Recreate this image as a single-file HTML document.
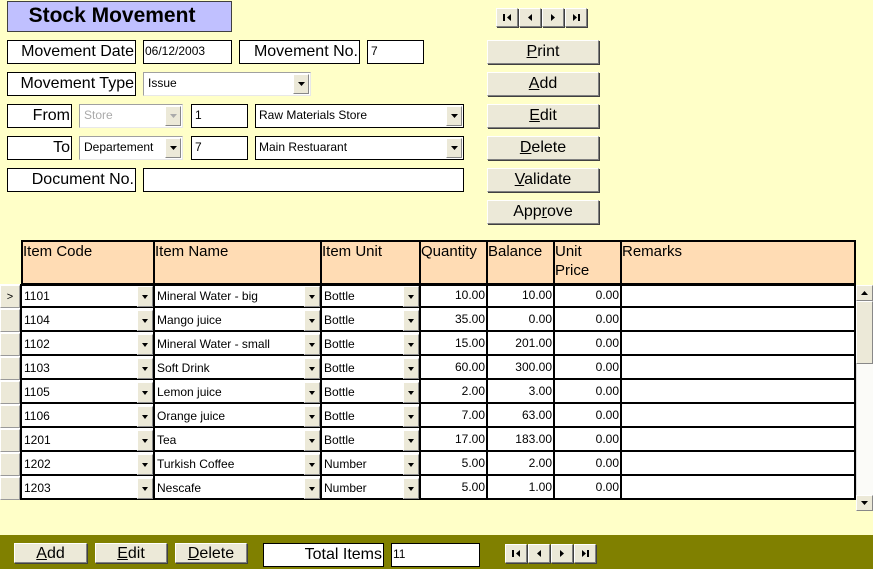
<!DOCTYPE html>
<html><head><meta charset="utf-8">
<style>
*{box-sizing:border-box;margin:0;padding:0}
body{width:873px;height:569px;background:#ffffc8;position:relative;overflow:hidden;font-family:"Liberation Sans",sans-serif;}
.a{position:absolute}
.lbl{position:absolute;background:#fff;border:1px solid #000;font-size:16px;text-align:right;padding-right:1px;line-height:21px;white-space:nowrap;color:#000}
.fld{position:absolute;background:#fff;border:1px solid #000;font-size:12px;line-height:20px;padding-left:3px;white-space:nowrap}
.cmb{position:absolute;background:#fff;border:1px solid #a0a0a0;border-right-color:#e8e8e8;border-bottom-color:#e8e8e8;font-size:12px;line-height:20px;padding-left:4px;white-space:nowrap}
.dd{position:absolute;right:1px;top:1px;bottom:1px;width:16px;background:#ece9d8;border:1px solid #fff;border-right-color:#888;border-bottom-color:#888}
.dd svg{position:absolute;left:4px;top:50%;margin-top:-2px}
.btn{position:absolute;background:#ece9d8;border:1px solid #fff;border-right-color:#808080;border-bottom-color:#808080;box-shadow:1px 1px 0 #404040;font-size:16px;text-align:center;line-height:21px;color:#000}
.nav{position:absolute;width:22px;height:19px;background:#ece9d8;border:1px solid #fff;border-right-color:#808080;border-bottom-color:#808080;box-shadow:1px 1px 0 #404040}
.nav svg{position:absolute;left:6px;top:4px}
.hd{position:absolute;top:240px;height:45px;background:#ffdcb4;border:2px solid #000;border-right:none;font-size:15px;line-height:19px;padding-left:0px;color:#000}
.cell{position:absolute;height:24px;background:#fff;border-left:2px solid #000;border-bottom:2px solid #000;font-size:12px;line-height:22px;white-space:nowrap}
.num{text-align:right;padding-right:2px}
.txt{padding-left:2px}
.sel{position:absolute;left:0;width:20px;height:23px;background:#ece9d8;border:1px solid #fff;border-right-color:#999;border-bottom-color:#999;font-size:11px;text-align:center;line-height:22px}
</style></head><body>

<div class="a" style="left:7px;top:1px;width:225px;height:31px;background:#c0c0ff;border:1px solid #404040;font-weight:bold;font-size:21px;text-align:center;line-height:28px;padding-right:15px">Stock Movement</div>

<div class="lbl" style="left:7px;top:40px;width:129px;height:24px">Movement Date</div>
<div class="fld" style="left:143px;top:40px;width:89px;height:24px;padding-left:1px">06/12/2003</div>
<div class="lbl" style="left:239px;top:40px;width:121px;height:24px">Movement No.</div>
<div class="fld" style="left:367px;top:40px;width:57px;height:24px">7</div>

<div class="lbl" style="left:7px;top:72px;width:129px;height:24px">Movement Type</div>
<div class="cmb" style="left:143px;top:72px;width:168px;height:24px">Issue<div class="dd"><svg width="7" height="4"><path d="M0 0H7L3.5 4Z" fill="#000"/></svg></div></div>

<div class="lbl" style="left:7px;top:104px;width:65px;height:24px">From</div>
<div class="cmb" style="left:79px;top:104px;width:104px;height:24px;color:#aaa">Store<div class="dd"><svg width="7" height="4"><path d="M0 0H7L3.5 4Z" fill="#aaa"/></svg></div></div>
<div class="fld" style="left:191px;top:104px;width:57px;height:24px">1</div>
<div class="fld" style="left:255px;top:104px;width:209px;height:24px">Raw Materials Store<div class="dd"><svg width="7" height="4"><path d="M0 0H7L3.5 4Z" fill="#000"/></svg></div></div>

<div class="lbl" style="left:7px;top:136px;width:65px;height:24px">To</div>
<div class="cmb" style="left:79px;top:136px;width:104px;height:24px">Departement<div class="dd"><svg width="7" height="4"><path d="M0 0H7L3.5 4Z" fill="#000"/></svg></div></div>
<div class="fld" style="left:191px;top:136px;width:57px;height:24px">7</div>
<div class="fld" style="left:255px;top:136px;width:209px;height:24px">Main Restuarant<div class="dd"><svg width="7" height="4"><path d="M0 0H7L3.5 4Z" fill="#000"/></svg></div></div>

<div class="lbl" style="left:7px;top:168px;width:129px;height:24px">Document No.</div>
<div class="fld" style="left:143px;top:168px;width:321px;height:24px"></div>

<div class="nav" style="left:496px;top:8px"><svg width="9" height="9"><path d="M1 1V8" stroke="#000" stroke-width="2"/><path d="M8 1V8L4 4.5Z" fill="#000"/></svg></div>
<div class="nav" style="left:519px;top:8px"><svg width="9" height="9"><path d="M6 1V8L2 4.5Z" fill="#000"/></svg></div>
<div class="nav" style="left:542px;top:8px"><svg width="9" height="9"><path d="M2 1V8L6 4.5Z" fill="#000"/></svg></div>
<div class="nav" style="left:565px;top:8px"><svg width="9" height="9"><path d="M1 1V8L5 4.5Z" fill="#000"/><path d="M7 1V8" stroke="#000" stroke-width="2"/></svg></div>

<div class="btn" style="left:487px;top:40px;width:112px;height:24px"><u>P</u>rint</div>
<div class="btn" style="left:487px;top:72px;width:112px;height:24px"><u>A</u>dd</div>
<div class="btn" style="left:487px;top:104px;width:112px;height:24px"><u>E</u>dit</div>
<div class="btn" style="left:487px;top:136px;width:112px;height:24px"><u>D</u>elete</div>
<div class="btn" style="left:487px;top:168px;width:112px;height:24px"><u>V</u>alidate</div>
<div class="btn" style="left:487px;top:200px;width:112px;height:24px">App<u>r</u>ove</div>

<!-- grid header -->
<div class="hd" style="left:21px;width:134px">Item Code</div>
<div class="hd" style="left:153px;width:169px">Item Name</div>
<div class="hd" style="left:320px;width:101px">Item Unit</div>
<div class="hd" style="left:419px;width:69px">Quantity</div>
<div class="hd" style="left:486px;width:69px">Balance</div>
<div class="hd" style="left:553px;width:69px">Unit<br>Price</div>
<div class="hd" style="left:620px;width:236px;border-right:2px solid #000">Remarks</div>

<!-- rows -->
<div id="rows">
<div class="a" style="left:0;top:284px;width:856px;height:216px;background:#fff"></div>
</div>

<!-- row data -->
<div class="sel" style="top:285px">&gt;</div>
<div class="sel" style="top:309px"></div>
<div class="sel" style="top:333px"></div>
<div class="sel" style="top:357px"></div>
<div class="sel" style="top:381px"></div>
<div class="sel" style="top:405px"></div>
<div class="sel" style="top:429px"></div>
<div class="sel" style="top:453px"></div>
<div class="sel" style="top:477px"></div>

<div class="a" style="left:20px;top:284px;width:836px;height:216px;border-top:2px solid #000;border-right:2px solid #000"></div>
<!-- vertical lines -->
<div class="a" style="left:20px;top:284px;width:2px;height:216px;background:#000"></div>
<div class="a" style="left:153px;top:284px;width:2px;height:216px;background:#000"></div>
<div class="a" style="left:320px;top:284px;width:2px;height:216px;background:#000"></div>
<div class="a" style="left:419px;top:284px;width:2px;height:216px;background:#000"></div>
<div class="a" style="left:486px;top:284px;width:2px;height:216px;background:#000"></div>
<div class="a" style="left:553px;top:284px;width:2px;height:216px;background:#000"></div>
<div class="a" style="left:620px;top:284px;width:2px;height:216px;background:#000"></div>
<!-- horizontal lines -->
<div class="a" style="left:20px;top:306px;width:836px;height:2px;background:#000"></div>
<div class="a" style="left:20px;top:330px;width:836px;height:2px;background:#000"></div>
<div class="a" style="left:20px;top:354px;width:836px;height:2px;background:#000"></div>
<div class="a" style="left:20px;top:378px;width:836px;height:2px;background:#000"></div>
<div class="a" style="left:20px;top:402px;width:836px;height:2px;background:#000"></div>
<div class="a" style="left:20px;top:426px;width:836px;height:2px;background:#000"></div>
<div class="a" style="left:20px;top:450px;width:836px;height:2px;background:#000"></div>
<div class="a" style="left:20px;top:474px;width:836px;height:2px;background:#000"></div>
<div class="a" style="left:20px;top:498px;width:836px;height:2px;background:#000"></div>

<style>
.r{position:absolute;height:22px;font-size:12px;line-height:22px;white-space:nowrap}
.c1{left:24px;width:129px}.c2{left:157px;width:163px}.c3{left:324px;width:95px}
.c4{left:421px;width:65px;text-align:right;padding-right:1px}.c5{left:488px;width:65px;text-align:right;padding-right:1px}.c6{left:555px;width:65px;text-align:right;padding-right:1px}
.gd{position:absolute;right:0;top:1px;width:16px;height:21px;background:#ece9d8;border:1px solid #fff;border-right-color:#888;border-bottom-color:#888}
.gd::after{content:"";position:absolute;left:4px;top:8px;border-left:3.5px solid transparent;border-right:3.5px solid transparent;border-top:4px solid #000}
</style>

<div class="r c1" style="top:285px">1101<span class="gd"></span></div><div class="r c2" style="top:285px">Mineral Water - big<span class="gd"></span></div><div class="r c3" style="top:285px">Bottle<span class="gd"></span></div><div class="r c4" style="top:284px">10.00</div><div class="r c5" style="top:284px">10.00</div><div class="r c6" style="top:284px">0.00</div>
<div class="r c1" style="top:309px">1104<span class="gd"></span></div><div class="r c2" style="top:309px">Mango juice<span class="gd"></span></div><div class="r c3" style="top:309px">Bottle<span class="gd"></span></div><div class="r c4" style="top:308px">35.00</div><div class="r c5" style="top:308px">0.00</div><div class="r c6" style="top:308px">0.00</div>
<div class="r c1" style="top:333px">1102<span class="gd"></span></div><div class="r c2" style="top:333px">Mineral Water - small<span class="gd"></span></div><div class="r c3" style="top:333px">Bottle<span class="gd"></span></div><div class="r c4" style="top:332px">15.00</div><div class="r c5" style="top:332px">201.00</div><div class="r c6" style="top:332px">0.00</div>
<div class="r c1" style="top:357px">1103<span class="gd"></span></div><div class="r c2" style="top:357px">Soft Drink<span class="gd"></span></div><div class="r c3" style="top:357px">Bottle<span class="gd"></span></div><div class="r c4" style="top:356px">60.00</div><div class="r c5" style="top:356px">300.00</div><div class="r c6" style="top:356px">0.00</div>
<div class="r c1" style="top:381px">1105<span class="gd"></span></div><div class="r c2" style="top:381px">Lemon juice<span class="gd"></span></div><div class="r c3" style="top:381px">Bottle<span class="gd"></span></div><div class="r c4" style="top:380px">2.00</div><div class="r c5" style="top:380px">3.00</div><div class="r c6" style="top:380px">0.00</div>
<div class="r c1" style="top:405px">1106<span class="gd"></span></div><div class="r c2" style="top:405px">Orange juice<span class="gd"></span></div><div class="r c3" style="top:405px">Bottle<span class="gd"></span></div><div class="r c4" style="top:404px">7.00</div><div class="r c5" style="top:404px">63.00</div><div class="r c6" style="top:404px">0.00</div>
<div class="r c1" style="top:429px">1201<span class="gd"></span></div><div class="r c2" style="top:429px">Tea<span class="gd"></span></div><div class="r c3" style="top:429px">Bottle<span class="gd"></span></div><div class="r c4" style="top:428px">17.00</div><div class="r c5" style="top:428px">183.00</div><div class="r c6" style="top:428px">0.00</div>
<div class="r c1" style="top:453px">1202<span class="gd"></span></div><div class="r c2" style="top:453px">Turkish Coffee<span class="gd"></span></div><div class="r c3" style="top:453px">Number<span class="gd"></span></div><div class="r c4" style="top:452px">5.00</div><div class="r c5" style="top:452px">2.00</div><div class="r c6" style="top:452px">0.00</div>
<div class="r c1" style="top:477px">1203<span class="gd"></span></div><div class="r c2" style="top:477px">Nescafe<span class="gd"></span></div><div class="r c3" style="top:477px">Number<span class="gd"></span></div><div class="r c4" style="top:476px">5.00</div><div class="r c5" style="top:476px">1.00</div><div class="r c6" style="top:476px">0.00</div>

<!-- scrollbar -->
<div class="a" style="left:856px;top:285px;width:17px;height:226px;background:#fbfbf8;border-left:1px solid #ddd"></div>
<div class="a" style="left:856px;top:285px;width:17px;height:16px;background:#ece9d8;border:1px solid #fff;border-right-color:#888;border-bottom-color:#888"><svg class="a" style="left:4px;top:5px" width="7" height="4"><path d="M0 4H7L3.5 0Z" fill="#000"/></svg></div>
<div class="a" style="left:856px;top:301px;width:17px;height:63px;background:#ece9d8;border:1px solid #fff;border-right-color:#888;border-bottom-color:#888"></div>
<div class="a" style="left:856px;top:495px;width:17px;height:16px;background:#ece9d8;border:1px solid #fff;border-right-color:#888;border-bottom-color:#888"><svg class="a" style="left:4px;top:5px" width="7" height="4"><path d="M0 0H7L3.5 4Z" fill="#000"/></svg></div>

<!-- bottom bar -->
<div class="a" style="left:0;top:535px;width:873px;height:34px;background:#808000"></div>
<div class="btn" style="left:14px;top:543px;width:73px;height:20px;line-height:19px"><u>A</u>dd</div>
<div class="btn" style="left:95px;top:543px;width:72px;height:20px;line-height:19px"><u>E</u>dit</div>
<div class="btn" style="left:175px;top:543px;width:72px;height:20px;line-height:19px"><u>D</u>elete</div>
<div class="lbl" style="left:263px;top:543px;width:121px;height:24px">Total Items</div>
<div class="fld" style="left:391px;top:543px;width:89px;height:24px;padding-left:1px">11</div>
<div class="nav" style="left:505px;top:544px"><svg width="9" height="9"><path d="M1 1V8" stroke="#000" stroke-width="2"/><path d="M8 1V8L4 4.5Z" fill="#000"/></svg></div>
<div class="nav" style="left:528px;top:544px"><svg width="9" height="9"><path d="M6 1V8L2 4.5Z" fill="#000"/></svg></div>
<div class="nav" style="left:551px;top:544px"><svg width="9" height="9"><path d="M2 1V8L6 4.5Z" fill="#000"/></svg></div>
<div class="nav" style="left:574px;top:544px"><svg width="9" height="9"><path d="M1 1V8L5 4.5Z" fill="#000"/><path d="M7 1V8" stroke="#000" stroke-width="2"/></svg></div>

</body></html>
